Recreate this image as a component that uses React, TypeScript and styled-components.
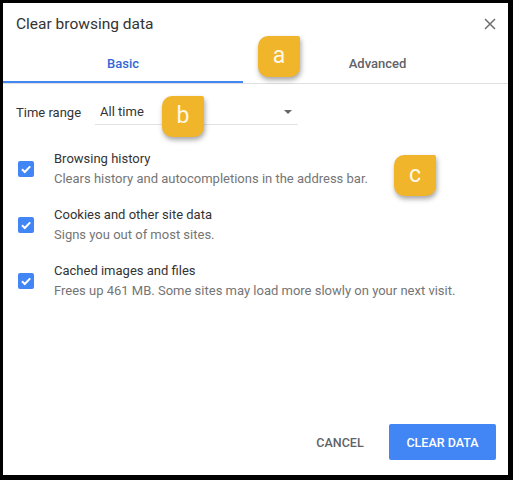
import React from "react";
import styled, { createGlobalStyle } from "styled-components";

const Global = createGlobalStyle`
  html, body { margin: 0; padding: 0; background: #000; }
  body { font-family: Roboto, "Liberation Sans", Arial, sans-serif; }
`;

const Dialog = styled.div`
  position: relative;
  box-sizing: border-box;
  margin: 3px 5px 5px 3px;
  width: 505px;
  height: 472px;
  background: #fff;
  display: flex;
  flex-direction: column;
`;

const Header = styled.div`
  display: flex;
  align-items: center;
  justify-content: space-between;
  height: 40px;
  padding: 2px 11px 0 13px;
  box-sizing: border-box;
`;

const Title = styled.div`
  font-size: 15.5px;
  color: #333;
  line-height: 20px;
`;

const Close = styled.button`
  border: 0;
  background: none;
  padding: 0;
  width: 14px;
  height: 14px;
  display: flex;
  align-items: center;
  justify-content: center;
`;

const TabBar = styled.div`
  display: flex;
  border-bottom: 1px solid #e0e0e0;
`;

const Tab = styled.div<{ $active?: boolean; $w?: number }>`
  ${(p) => (p.$w ? `width: ${p.$w}px;` : "flex: 1;")}
  height: 40px;
  box-sizing: border-box;
  display: flex;
  align-items: center;
  justify-content: center;
  font-size: 13px;
  font-weight: 500;
  padding: 2px 0 0 ${(p) => (p.$w ? "0" : "4px")};
  color: ${(p) => (p.$active ? "#3367d6" : "#5f6368")};
  border-bottom: 2px solid ${(p) => (p.$active ? "#4285f4" : "transparent")};
`;

const RangeRow = styled.div`
  display: flex;
  align-items: center;
  height: 32px;
  margin-top: 12px;
  padding-left: 13px;
  gap: 14px;
`;

const Label = styled.div`
  font-size: 13px;
  color: #333;
`;

const Select = styled.div`
  width: 203px;
  height: 25px;
  border-bottom: 1px solid #e3e3e3;
  display: flex;
  align-items: center;
  justify-content: space-between;
  padding: 0 6px 0 5px;
  box-sizing: border-box;
  font-size: 13px;
  color: #333;
`;

const Arrow = styled.span`
  width: 0;
  height: 0;
  border-left: 4px solid transparent;
  border-right: 4px solid transparent;
  border-top: 4px solid #666;
`;

const List = styled.div`
  display: flex;
  flex-direction: column;
  gap: 16px;
  margin-top: 21px;
`;

const Item = styled.div`
  display: flex;
  align-items: center;
  height: 40px;
  padding-left: 15px;
  gap: 20px;
`;

const Box = styled.span`
  width: 16px;
  height: 16px;
  border-radius: 2px;
  background: #4285f4;
  display: flex;
  align-items: center;
  justify-content: center;
  flex: none;
`;

const Texts = styled.div`
  display: flex;
  flex-direction: column;
`;

const ItemTitle = styled.div`
  font-size: 13px;
  line-height: 20px;
  color: #333;
`;

const ItemDesc = styled.div`
  font-size: 13px;
  line-height: 20px;
  color: #757575;
`;

const Footer = styled.div`
  margin-top: auto;
  display: flex;
  justify-content: flex-end;
  align-items: center;
  gap: 9px;
  padding: 0 12px 15px 0;
`;

const Button = styled.button<{ $primary?: boolean }>`
  border: 0;
  border-radius: 2px;
  height: 36px;
  padding: 0 16px;
  font-family: Roboto, "Liberation Sans", Arial, sans-serif;
  font-size: 12.5px;
  font-weight: 500;
  min-width: ${(p) => (p.$primary ? "107px" : "80px")};
  background: ${(p) => (p.$primary ? "#4285f4" : "transparent")};
  color: ${(p) => (p.$primary ? "#fff" : "#5f6368")};
`;

const Badge = styled.div<{ $x: number; $y: number }>`
  position: absolute;
  left: ${(p) => p.$x}px;
  top: ${(p) => p.$y}px;
  width: 42px;
  height: 41px;
  background: #f1b52b;
  border-radius: 10px 2px 10px 10px;
  box-shadow: 1px 3px 5px rgba(0, 0, 0, 0.35);
  color: #fff8e6;
  font-size: 23px;
  display: flex;
  align-items: center;
  justify-content: center;
  padding-bottom: 2px;
  box-sizing: border-box;
`;

const items = [
  { t: "Browsing history", d: "Clears history and autocompletions in the address bar." },
  { t: "Cookies and other site data", d: "Signs you out of most sites." },
  { t: "Cached images and files", d: "Frees up 461 MB. Some sites may load more slowly on your next visit." },
];

export default function App() {
  return (
    <>
      <Global />
      <Dialog>
        <Header>
          <Title>Clear browsing data</Title>
          <Close aria-label="close">
            <svg width="12" height="12" viewBox="0 0 12 12">
              <path d="M1 1 L11 11 M11 1 L1 11" stroke="#6e6e6e" strokeWidth="1.5" fill="none" />
            </svg>
          </Close>
        </Header>
        <TabBar>
          <Tab $active $w={240}>Basic</Tab>
          <Tab>Advanced</Tab>
        </TabBar>
        <RangeRow>
          <Label>Time range</Label>
          <Select>
            <span>All time</span>
            <Arrow />
          </Select>
        </RangeRow>
        <List>
          {items.map((it) => (
            <Item key={it.t}>
              <Box>
                <svg width="12" height="12" viewBox="0 0 12 12">
                  <path d="M2 6.2 L4.8 9 L10.2 3.4" stroke="#fff" strokeWidth="2" fill="none" />
                </svg>
              </Box>
              <Texts>
                <ItemTitle>{it.t}</ItemTitle>
                <ItemDesc>{it.d}</ItemDesc>
              </Texts>
            </Item>
          ))}
        </List>
        <Footer>
          <Button>CANCEL</Button>
          <Button $primary>CLEAR DATA</Button>
        </Footer>
        <Badge $x={255} $y={33}>a</Badge>
        <Badge $x={159} $y={93}>b</Badge>
        <Badge $x={391} $y={152}>c</Badge>
      </Dialog>
    </>
  );
}
